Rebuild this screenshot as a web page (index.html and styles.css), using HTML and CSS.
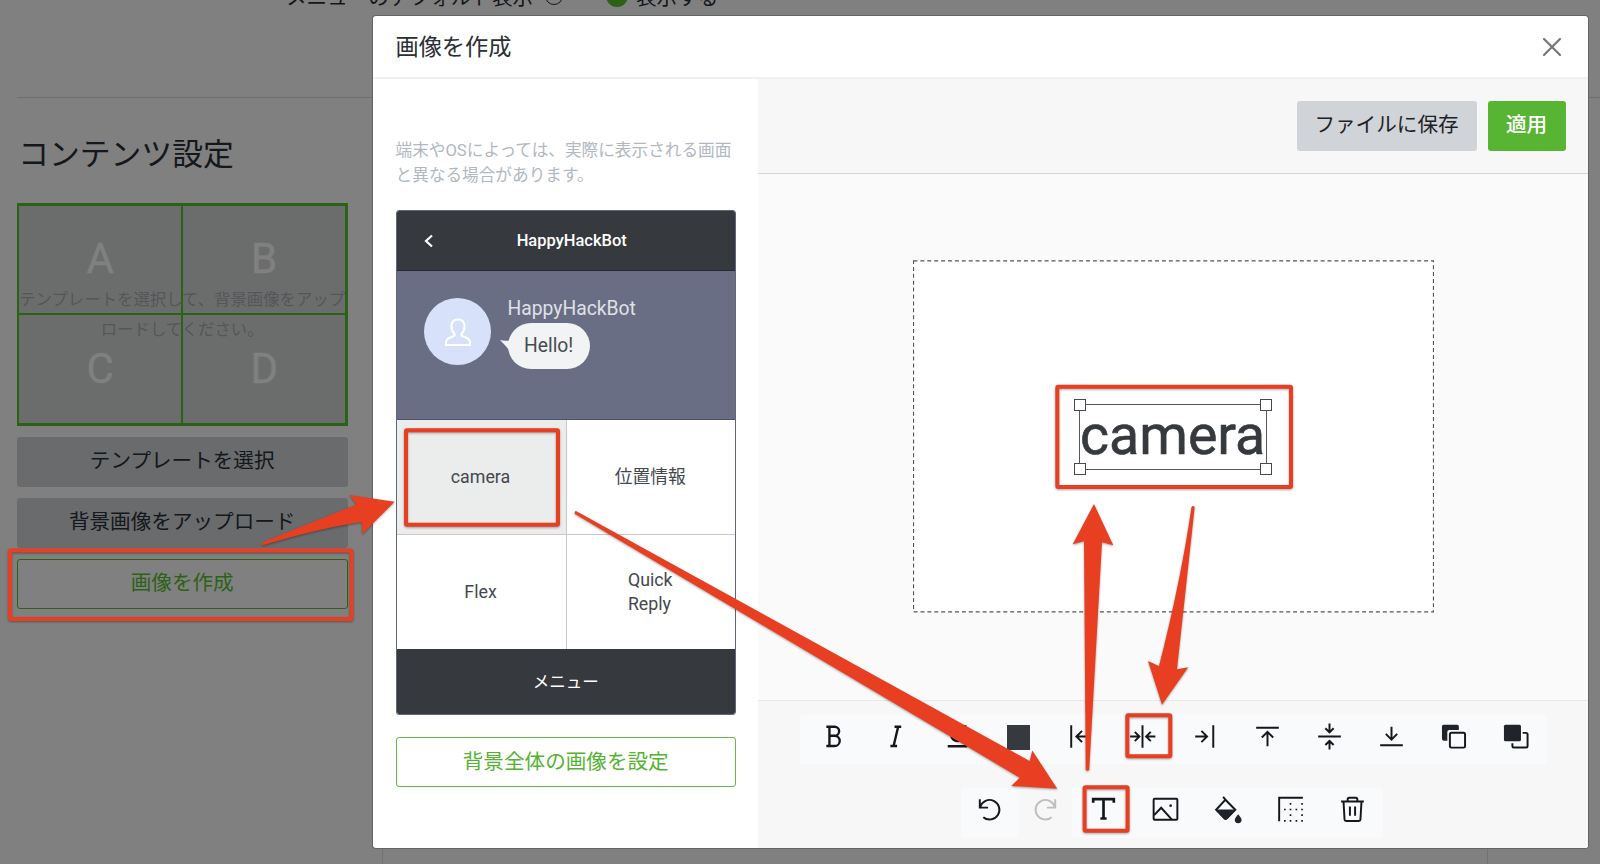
FILE: index.html
```html
<!DOCTYPE html>
<html lang="ja">
<head>
<meta charset="utf-8">
<title>画像を作成</title>
<link rel="stylesheet" href="styles.css">
</head>
<body>
<div class="page">
  <div class="setting-row">
    <span class="setting-label">メニューのデフォルト表示</span>
    <span class="help-icon"></span>
    <span class="radio-on"></span>
    <span class="radio-label">表示する</span>
  </div>
  <main class="content">
    <h2 class="content-title">コンテンツ設定</h2>
    <div class="side">
      <div class="template">
        <div class="template-cell">A</div><div class="template-cell">B</div>
        <div class="template-cell">C</div><div class="template-cell">D</div>
        <p class="template-hint">テンプレートを選択して、背景画像をアップロードしてください。</p>
      </div>
      <div class="side-btn">テンプレートを選択</div>
      <div class="side-btn">背景画像をアップロード</div>
      <div class="side-btn side-btn-outline">画像を作成</div>
    </div>
  </main>
  <div class="page-panel"></div>
</div>

<section class="modal">
  <header class="modal-header">
    <h1 class="modal-title">画像を作成</h1>
    <svg class="close" width="20" height="20" viewBox="0 0 20 20"><path d="M2 2 18 18M18 2 2 18"/></svg>
  </header>
  <div class="modal-body">
    <aside class="preview">
      <p class="note">端末やOSによっては、実際に表示される画面と異なる場合があります。</p>
      <div class="phone">
        <div class="phone-head">
          <svg class="back" width="10" height="14" viewBox="0 0 10 14"><path d="M8 1.500 2 7l6 5.500"/></svg>
          <span>HappyHackBot</span>
        </div>
        <div class="chat">
          <div class="avatar">
            <svg width="28" height="30" viewBox="0 0 28 30"><path d="M10.500 17C8.500 15 7.500 12.500 7.500 9.300 7.500 5 10 2.500 14 2.500s6.500 2.500 6.500 6.800c0 3.200-1 5.700-3 7.700-.6 1.300.3 2 1.800 2.500 4 1.200 6.700 2.500 6.700 6V28H2v-2.500c0-3.500 2.700-4.800 6.700-6 1.500-.5 2.400-1.200 1.800-2.500z"/></svg>
          </div>
          <div class="chat-text">
            <span class="chat-name">HappyHackBot</span>
            <span class="bubble">Hello!<svg class="bubble-tail" width="14" height="12" viewBox="0 0 14 12"><path d="M1 1Q8 3 14 0V12Q9 11 8 8.500 5 5 1 1z"/></svg></span>
          </div>
        </div>
        <div class="rich-menu">
          <div class="menu-cell menu-cell-active">camera</div>
          <div class="menu-cell">位置情報</div>
          <div class="menu-cell">Flex</div>
          <div class="menu-cell">Quick<br>Reply</div>
        </div>
        <div class="phone-foot">メニュー</div>
      </div>
      <div class="set-bg">背景全体の画像を設定</div>
    </aside>
    <div class="editor">
      <div class="actions">
        <div class="btn btn-gray">ファイルに保存</div>
        <div class="btn btn-green">適用</div>
      </div>
      <div class="stage">
        <div class="artboard">
          <svg class="artboard-frame" width="521" height="353"><rect x=".5" y=".8" width="520" height="351"/></svg>
          <div class="text-object">camera
            <i class="handle tl"></i><i class="handle tr"></i><i class="handle bl"></i><i class="handle br"></i>
          </div>
        </div>
      </div>
      <div class="tools">
        <div class="tool-row">
          <div class="group">
            <div class="tool"><svg viewBox="0 0 32 32"><path d="M11 6.500h8a4.400 4.400 0 0 1 0 8.800h-5M19 15.300a4.900 4.900 0 0 1 0 9.900h-8M14 6.500v18.700" class="w2"/></svg></div>
            <div class="tool"><svg viewBox="0 0 32 32"><path d="M17 6.500h6.500M13 25.200h6.500M20.500 6.500 16.100 25.200" class="w2"/></svg></div>
            <div class="tool"><svg viewBox="0 0 32 32"><path d="M8.500 6h6M19.500 6h6M11 6v8.500a6 6 0 0 0 12 0V6M7.500 25.500h19" class="w2"/></svg></div>
            <div class="tool"><span class="swatch"></span></div>
            <div class="tool"><svg viewBox="0 0 32 32"><path d="M7 5v22M26 16H12M17.500 10.500 12 16l5.500 5.500"/></svg></div>
            <div class="tool"><svg viewBox="0 0 32 32"><path d="M16 5v22M4 16h8M8.500 11.500 13 16l-4.500 4.500M28.500 16h-8M24 11.500 19.500 16l4.500 4.500"/></svg></div>
            <div class="tool"><svg viewBox="0 0 32 32"><path d="M24.500 5v22M7 16h11.500M13 10.500l5.500 5.500-5.500 5.500"/></svg></div>
            <div class="tool"><svg viewBox="0 0 32 32"><path d="M5 7.500h22M16 25.500V12M10.500 17 16 11.500l5.500 5.500"/></svg></div>
            <div class="tool"><svg viewBox="0 0 32 32"><path d="M5 16.100h22M16 3.500v8M12 8l4 4 4-4M16 28.500v-8M12 24.300l4-4 4 4"/></svg></div>
            <div class="tool"><svg viewBox="0 0 32 32"><path d="M5 24.500h22M16 6.500v12.500M10.500 13.500 16 19l5.500-5.500"/></svg></div>
            <div class="tool"><svg viewBox="0 0 32 32"><path class="solid" d="M6.500 4.600h13a1.700 1.700 0 0 1 1.700 1.700v3.500H11.800a1.800 1.800 0 0 0-1.800 1.800v8.400H6.500a1.700 1.700 0 0 1-1.700-1.700v-12a1.700 1.700 0 0 1 1.700-1.700z"/><rect x="12.500" y="12.300" width="14.700" height="14.500" rx="1.500"/></svg></div>
            <div class="tool"><svg viewBox="0 0 32 32"><rect class="solid" x="4.800" y="4.600" width="16.500" height="16" rx="1.500"/><path d="M23 12.500h3.200a1.500 1.500 0 0 1 1.500 1.500v11.200a1.500 1.500 0 0 1-1.500 1.500H14.500a1.500 1.500 0 0 1-1.500-1.500v-2.700"/></svg></div>
          </div>
        </div>
        <div class="tool-row tool-row-second">
          <div class="group group-undo">
            <div class="tool"><svg viewBox="0 0 32 32"><path d="M6.600 6v8.200h8M7 13.500A9.500 9.500 0 1 1 10 23.500"/></svg></div>
          </div>
          <div class="group group-redo">
            <div class="tool"><svg viewBox="0 0 32 32"><path d="M25.400 6v8.200h-8M25 13.500A9.500 9.500 0 1 0 22 23.500"/></svg></div>
          </div>
          <div class="group">
            <div class="tool"><svg viewBox="0 0 32 32"><path class="w3" d="M6 9.500V6h20v3.500M16 6v18.500M13 24.700h6"/></svg></div>
            <div class="tool"><svg viewBox="0 0 32 32"><rect x="4.500" y="5.500" width="23" height="20.500" rx="1"/><path d="M5 21.500l6.800-7.200L22 25.500"/><circle class="solid" cx="21" cy="12.300" r="1.300"/></svg></div>
            <div class="tool"><svg viewBox="0 0 32 32"><path d="M10.800 3.700l2.200 2.800L4 16.300l8 8.200c.9.900 1.500.9 2.400 0l8.200-8.200L13 6.500"/><path class="solid" d="M3.500 16h19.500l-8.500 9c-.8.700-1.600.7-2.400 0z"/><path class="solid" d="M25.400 20.500c2 2.500 3.300 4 3.300 5.500a3.300 3.300 0 0 1-6.600 0c0-1.500 1.300-3 3.300-5.500z"/></svg></div>
            <div class="tool"><svg viewBox="0 0 32 32"><path d="M5 27.500V4.700h23"/><path class="dots" d="M16 10.500h.01M27.200 10.500h.01M10.500 16h.01M16 16h.01M21.700 16h.01M27.200 16h.01M16 21.500h.01M27.200 21.500h.01M10.500 27h.01M16 27h.01M21.700 27h.01M27.200 27h.01"/></svg></div>
            <div class="tool"><svg viewBox="0 0 32 32"><path d="M5 8.300h22M11.300 8V6.200a1.500 1.500 0 0 1 1.500-1.500h6.400a1.500 1.500 0 0 1 1.500 1.500V8M7.300 8.500l1 17.200a1.500 1.500 0 0 0 1.500 1.400h12.400a1.500 1.500 0 0 0 1.500-1.400l1-17.200M13.500 13v9M18.500 13v9"/></svg></div>
          </div>
        </div>
      </div>
    </div>
  </div>
</section>

<svg class="marks" width="1600" height="864" viewBox="0 0 1600 864">
  <g class="boxes">
    <rect x="10" y="550.500" width="341.500" height="68.500" rx="1"/>
    <rect x="406" y="430.200" width="152" height="94.600" rx="1"/>
    <rect x="1057.300" y="386.800" width="233.700" height="100.200" rx="1"/>
    <rect x="1127.300" y="715.300" width="43" height="41" rx="1"/>
    <rect x="1084.600" y="787.200" width="43" height="43.600" rx="1"/>
  </g>
  <g class="arrows">
    <path d="M262.500 542.300 356.500 504.500 349.500 495 394.700 501.700 362.300 534 361.700 522Q320 528 262.500 545.300Q261 544 262.500 542.300z"/>
    <path d="M576 511 1029.700 761 1032.300 750.500 1057.300 788.800 1011.300 786 1019.700 777.700 575 514Q574 511.500 576 511z"/>
    <path d="M1085.700 770 1084 541.300 1072.700 544.300 1094 504 1113.300 545.200 1102 542.300 1089.200 770Q1087.500 771.500 1085.700 770z"/>
    <path d="M1191.500 507Q1193 505 1194.700 507L1177 669.300 1188.300 667.300 1162 704.700 1148 661 1159 666Q1181 580 1191.500 507z"/>
  </g>
</svg>
</body>
</html>
```
FILE: styles.css
```css
* { box-sizing: border-box; }
body {
  margin: 0;
  width: 1600px;
  height: 864px;
  overflow: hidden;
  position: relative;
  background: #808080;
  color: #14171b;
  font-family: Roboto, "Noto Sans CJK JP", sans-serif;
  font-size: 20.6px;
}
h1, h2, p { margin: 0; font-weight: 400; }

/* Dimmed page behind the dialog */
.page { height: 864px; display: flex; flex-direction: column; overflow: hidden; }
.setting-row {
  display: flex;
  align-items: center;
  height: 30px;
  margin: -19px 0 0 286px;
  flex: none;
}
.setting-label { width: 259px; white-space: nowrap; }
.help-icon { width: 18px; height: 18px; border: 1.500px solid #14171b; border-radius: 50%; }
.radio-on { width: 22px; height: 22px; margin: 0 8px 0 43px; border-radius: 50%; background: #2c6216; }
.content {
  flex: none;
  height: 751px;
  margin: 86px 0 0 16.700px;
  border-top: 1px solid #6f6f6f;
}
.content-title { margin: 35px 0 26px 1.500px; height: 44px; line-height: 44px; font-size: 30.800px; }
.side { width: 331px; display: flex; flex-direction: column; gap: 11.500px; }
.template {
  position: relative;
  display: grid;
  grid-template-columns: 1fr 1fr;
  grid-template-rows: 1fr 1fr;
  gap: 2px;
  height: 222.500px;
  padding: 2.500px;
  background: #2c6216;
}
.template-cell {
  display: flex;
  align-items: center;
  justify-content: center;
  padding-bottom: 2px;
  background: #6b6d6c;
  color: #808080;
  font-size: 42px;
  -webkit-text-stroke: .5px #808080;
}
.template-hint {
  position: absolute;
  inset: 82px -2px auto;
  text-align: center;
  color: #545659;
  font-size: 16.400px;
  line-height: 30px;
}
.side-btn {
  height: 49.500px;
  line-height: 49px;
  text-align: center;
  background: #696b6d;
  border-radius: 3px;
}
.side-btn-outline { background: none; border: 1px solid #2c6216; color: #2c6216; line-height: 47px; }
.page-panel { height: 20px; flex: none; width: 1106px; margin-left: 382px; border: solid #727272; border-width: 0 1px; }

/* Dialog */
.modal {
  position: absolute;
  left: 373px;
  top: 16px;
  width: 1215px;
  height: 832px;
  display: flex;
  flex-direction: column;
  background: #fff;
  border-radius: 3px;
  overflow: hidden;
  box-shadow: 0 0 0 1px #646464;
}
.modal-header {
  height: 63px;
  flex: none;
  display: flex;
  align-items: center;
  justify-content: space-between;
  padding: 0 26px 0 22.500px;
  border-bottom: 2px solid #f1f1f1;
}
.modal-title { font-size: 23.200px; line-height: 60px; color: #2a2e35; }
.close { fill: none; stroke: #777; stroke-width: 2.200; stroke-linecap: round; }
.modal-body { flex: 1; display: flex; }
.preview { width: 385px; padding: 60px 22px 0 22.500px; }
.note { font-size: 16.650px; line-height: 24.800px; color: #b1b8bf; margin-right: -5px; }
.phone {
  margin-top: 21.500px;
  height: 505px;
  border: 1px solid #60667c;
  border-radius: 3px;
  overflow: hidden;
  display: flex;
  flex-direction: column;
}
.phone-head {
  position: relative;
  flex: none;
  height: 60px;
  display: flex;
  align-items: center;
  justify-content: center;
  padding-left: 12px;
  background: #36393e;
  border-bottom: 1px solid #25282c;
  color: #fff;
  font-size: 16.500px;
  font-weight: 500;
}
.back { position: absolute; left: 27px; top: 23px; fill: none; stroke: #fff; stroke-width: 2.200; }
.chat { flex: none; height: 149px; display: flex; gap: 17px; padding: 27px 0 0 27.500px; background: #696e84; border-bottom: 1px solid #4b526a; }
.avatar {
  width: 67px;
  height: 67px;
  border-radius: 50%;
  background: #d7e2fa;
  display: flex;
  align-items: center;
  justify-content: center;
}
.avatar svg { fill: none; stroke: #fff; stroke-width: 2; }
.chat-text { display: flex; flex-direction: column; align-items: flex-start; margin-left: -.5px; }
.chat-name { height: 25px; line-height: 22px; font-size: 19.300px; color: #dfe1e7; }
.bubble {
  position: relative;
  height: 46px;
  padding: 0 17px 0 16.500px;
  border-radius: 23px;
  line-height: 46px;
  font-size: 19.300px;
  background: #f1f3f5;
  color: #474c52;
}
.bubble-tail { position: absolute; left: -9px; top: 16px; fill: #f1f3f5; }
.rich-menu {
  flex: none;
  height: 229px;
  display: grid;
  grid-template-columns: 169px 1fr;
  grid-template-rows: 114px 114px;
  gap: 1px;
  background: #c8c8c8;
}
.menu-cell {
  display: flex;
  align-items: center;
  justify-content: center;
  padding: 0 1px 1px 0;
  background: #fff;
  color: #44484d;
  font-size: 17.800px;
  line-height: 24px;
}
.menu-cell-active { background: #ebecec; }
.phone-foot {
  flex: none;
  height: 67px;
  background: #36393e;
  color: #fff;
  text-align: center;
  font-size: 16.500px;
  line-height: 67px;
}
.set-bg {
  margin-top: 22px;
  height: 50px;
  border: 1px solid #66bb48;
  border-radius: 3px;
  text-align: center;
  line-height: 48px;
  color: #55b332;
}
.editor { flex: 1; display: flex; flex-direction: column; background: #fafafa; }
.actions {
  height: 95px;
  flex: none;
  display: flex;
  justify-content: flex-end;
  gap: 11px;
  padding: 22px 22.500px 0 0;
  background: #f7f7f7;
  border-bottom: 1px solid #d6d6d6;
}
.btn { height: 50px; line-height: 49px; border-radius: 3px; text-align: center; }
.btn-gray { width: 180px; background: #d0d4d9; color: #1e2226; }
.btn-green { width: 78px; background: #58b533; color: #fff; font-weight: 500; }
.stage { flex: 1; padding: 86px 0 0 154.500px; }
.artboard { position: relative; width: 521px; height: 353px; background: #fff; }
.artboard-frame { position: absolute; inset: 0; fill: none; stroke: #50545a; stroke-width: 1.200; stroke-dasharray: 4 2.900; }
.text-object {
  position: absolute;
  left: 166px;
  top: 144px;
  width: 188px;
  height: 66px;
  border: 1px solid #55585e;
  font-size: 55.500px;
  line-height: 61px;
  color: #36393e;
  -webkit-text-stroke: .6px #36393e;
  white-space: nowrap;
  padding-left: .5px;
}
.handle { position: absolute; width: 12px; height: 12px; background: #fff; border: 1px solid #45494f; }
.tl { left: -6px; top: -6px; }
.tr { right: -6px; top: -6px; }
.bl { left: -6px; bottom: -6px; }
.br { right: -6px; bottom: -6px; }
.tools {
  height: 148px;
  flex: none;
  display: flex;
  flex-direction: column;
  align-items: center;
  gap: 23.500px;
  padding-top: 13px;
  background: #f7f7f7;
  border-top: 1px solid #e8e8e8;
}
.tool-row { display: flex; margin-left: 1px; }
.tool-row-second { margin-left: -1.500px; }
.group { display: flex; background: #f9fafc; border-radius: 3px; }
.group-redo { background: none; }
.tool { width: 62.200px; height: 50px; display: flex; align-items: center; justify-content: center; padding: 0 0 6px .5px; }
.group-undo .tool { width: 57px; padding-right: 1px; }
.group-redo .tool { width: 54px; opacity: .25; }
.tool svg { width: 33px; height: 33px; fill: none; stroke: #14171b; stroke-width: 1.900; }
.tool .w2 { stroke-width: 2.300; }
.tool .w3 { stroke-width: 2.600; }
.tool .solid { fill: #202329; stroke: none; }
.tool .dots { stroke-width: 1.600; stroke-linecap: square; }
.swatch { width: 23px; height: 25px; background: #36393e; margin: 3.500px 0 0 1px; }

/* Instruction marks over the whole screen */
.marks { position: absolute; left: 0; top: 0; filter: drop-shadow(0 1px 1px rgba(0, 0, 0, .35)); }
.boxes rect { fill: none; stroke: #e83f22; stroke-width: 4; }
.arrows path { fill: #e83f22; }
```
